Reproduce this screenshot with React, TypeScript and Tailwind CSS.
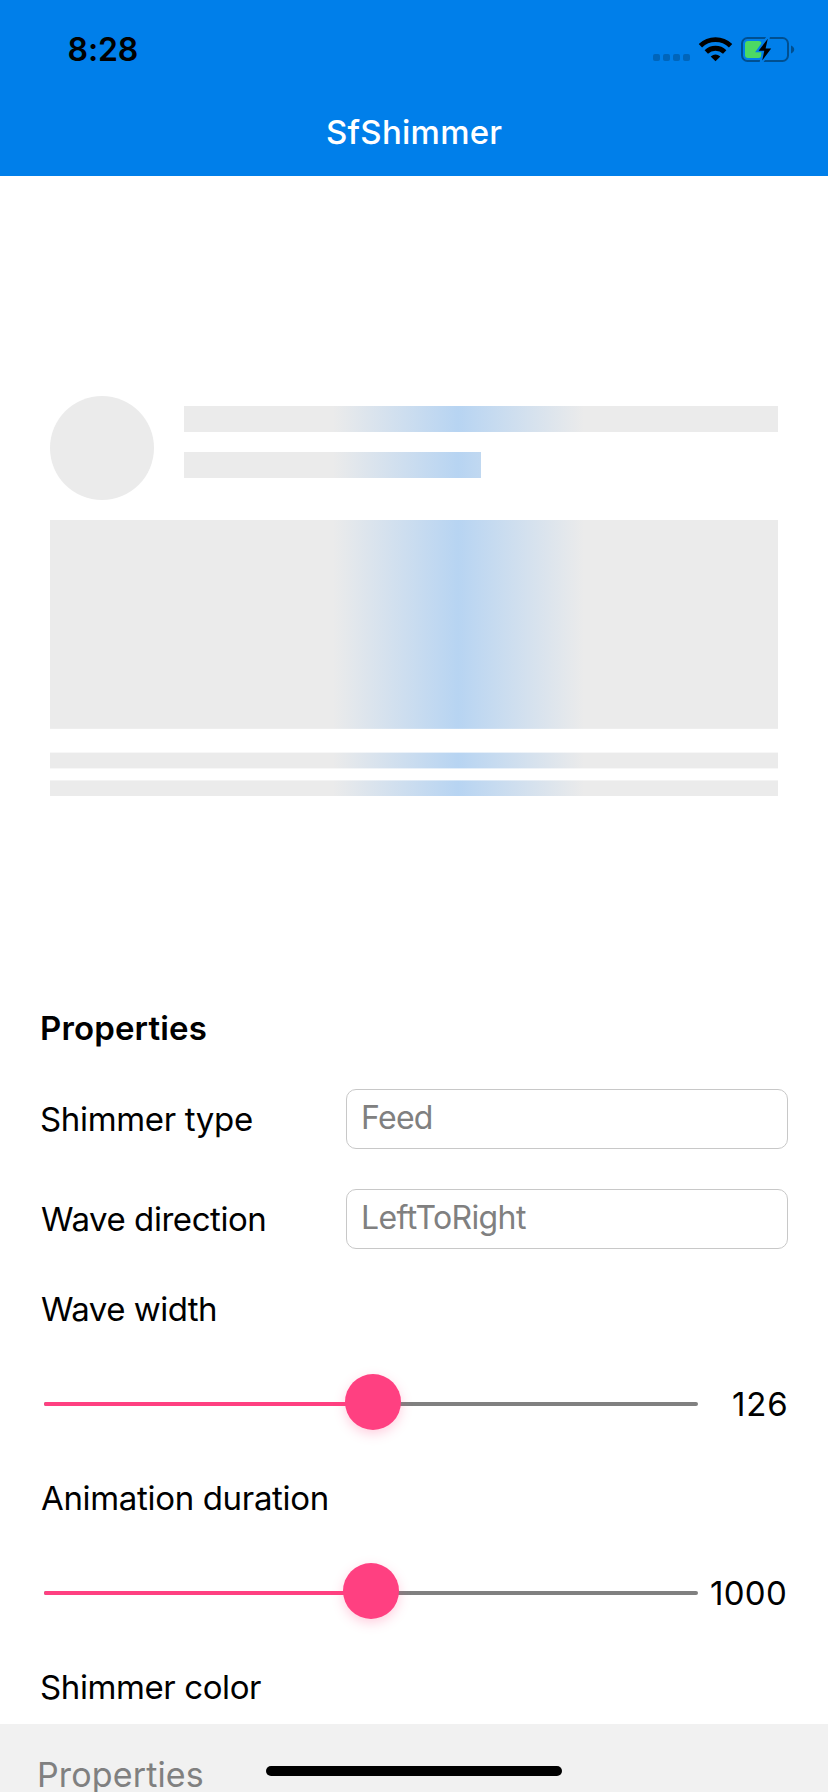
import React from "react";

const wave =
  "bg-[linear-gradient(90deg,#ebebeb_333px,#b7d4f2_458px,#ebebeb_584px)] bg-fixed";

function StatusIcons() {
  return (
    <svg width="144" height="28" viewBox="652 35 144 28" className="block">
      <g fill="#0065ba">
        <rect x="653" y="54" width="7" height="7" rx="2" />
        <rect x="663" y="54" width="7" height="7" rx="2" />
        <rect x="673" y="54" width="7" height="7" rx="2" />
        <rect x="683" y="54" width="7" height="7" rx="2" />
      </g>
      <g fill="none" stroke="#000" strokeWidth="4.8">
        <path d="M700.4 45.8A21.6 21.6 0 0 1 730.6 45.8" />
        <path d="M706.3 52A13.2 13.2 0 0 1 724.7 52" />
      </g>
      <path d="M715.5 61.2L710.7 56.4Q715.5 52.6 720.3 56.4Z" fill="#000" />
      <rect x="742" y="38" width="46" height="23" rx="5.5" fill="none" stroke="#004f90" strokeWidth="2" />
      <path d="M791 45.5Q794.2 46.8 794.2 49.5Q794.2 52.2 791 53.5Z" fill="#004f90" />
      <rect x="745" y="41" width="16.5" height="17" rx="3" fill="#4cd964" />
      <path
        d="M768.6 36L758 50.8H763.6L761 63L771.4 48.4H766Z"
        fill="#007fea"
        stroke="#007fea"
        strokeWidth="3"
      />
      <path d="M767.8 38.8L758.6 50.8H764.3L762.2 60.4L771.2 48.4H765.6Z" fill="#000" />
    </svg>
  );
}

function Slider({ fill, value, valueClass }: { fill: number; value: string; valueClass: string }) {
  return (
    <div className="flex h-14 items-start">
      <div className="relative ml-1 h-14 w-[654px] pt-7">
        <div className="flex h-1 overflow-hidden rounded-full bg-[#808080]">
          <div className="h-1 bg-[#ff4081]" style={{ width: fill }} />
        </div>
        <div
          className="absolute top-0 size-14 -translate-x-1/2 rounded-full bg-[#ff4081] shadow-[0_4px_12px_rgba(255,64,129,0.25)]"
          style={{ left: fill }}
        />
      </div>
      <span className={valueClass}>{value}</span>
    </div>
  );
}

function Picker({ label, labelClass, value, valueClass }: { label: string; labelClass: string; value: string; valueClass: string }) {
  return (
    <div className="flex h-15 items-center">
      <span className={labelClass}>{label}</span>
      <div className="flex h-15 w-[442px] items-start rounded-[10px] border border-[#c8c8c8] pt-2 pl-[14px] text-[32px] text-[#808080]">
        <span className={valueClass}>{value}</span>
      </div>
    </div>
  );
}

export default function App() {
  return (
    <div className="flex h-[1792px] w-[828px] flex-col overflow-hidden bg-white font-[Inter,sans-serif] text-[33px] leading-10 whitespace-nowrap text-black">
      <header className="flex h-44 flex-col bg-[#007fea]">
        <div className="flex h-10 justify-between mt-[30px] pr-8 pl-[67.5px]">
          <span className="text-[32px] font-semibold tracking-[-0.1px]">8:28</span>
          <div className="pt-[5px]">
            <StatusIcons />
          </div>
        </div>
        <h1 className="mt-[42px] pl-[326px] font-medium tracking-[0.25px] text-white">SfShimmer</h1>
      </header>

      <section className="flex h-[832px] flex-col px-[50px] pt-[220px]">
        <div className="flex gap-[30px]">
          <div className="size-[104px] rounded-full bg-[#ebebeb]" />
          <div className="flex flex-1 flex-col gap-5 pt-[10px]">
            <div className={`h-[26px] ${wave}`} />
            <div className={`h-[26px] w-[297px] ${wave}`} />
          </div>
        </div>
        <div className={`mt-5 h-[209px] border-b border-white/15 ${wave}`} />
        <div className={`mt-[23px] h-[17px] border-y border-white/60 ${wave}`} />
        <div className={`mt-[11px] h-4 border-t border-white/40 ${wave}`} />
      </section>

      <section className="flex h-[716px] flex-col pl-10">
        <h2 className="font-semibold tracking-[0.15px]">Properties</h2>
        <div className="mt-[41px] flex flex-col gap-10">
          <Picker label="Shimmer type" labelClass="w-[306px] tracking-[-0.34px]" value="Feed" valueClass="tracking-[-0.7px]" />
          <Picker label="Wave direction" labelClass="w-[306px] pl-px tracking-[-0.44px]" value="LeftToRight" valueClass="tracking-[-0.62px]" />
        </div>
        <span className="mt-10 pl-px tracking-[-0.52px]">Wave width</span>
        <div className="mt-[45px]">
          <Slider fill={329} value="126" valueClass="mt-[10px] ml-[34px] tracking-[0.9px]" />
        </div>
        <span className="mt-12 pl-px tracking-[-0.33px]">Animation duration</span>
        <div className="mt-[45px]">
          <Slider fill={327} value="1000" valueClass="mt-[10px] ml-[12px] tracking-[0.31px]" />
        </div>
        <span className="mt-12 tracking-[-0.4px]">Shimmer color</span>
      </section>

      <footer className="flex h-[68px] items-start overflow-hidden bg-[#f1f1f1] text-[34px] text-[#808080]">
        <span className="mt-[31px] ml-[37px] w-[229px] tracking-[0.15px]">Properties</span>
        <div className="mt-[42px] h-[10px] w-[296px] rounded-full bg-black" />
      </footer>
    </div>
  );
}
